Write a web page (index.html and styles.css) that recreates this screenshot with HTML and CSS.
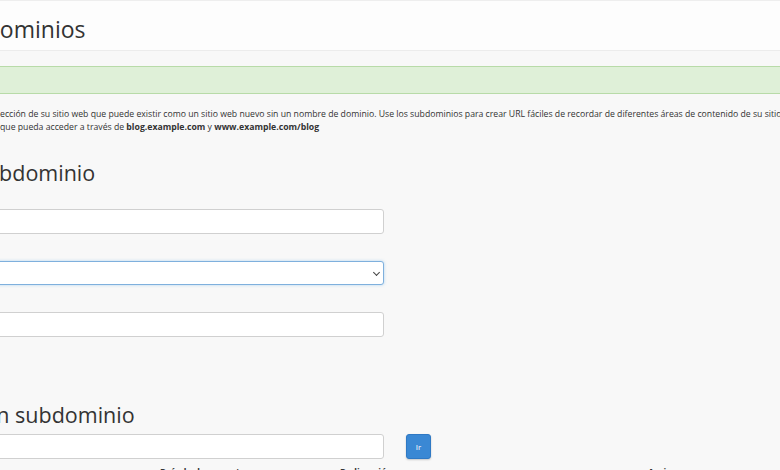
FILE: index.html
```html
<!DOCTYPE html>
<html lang="es">
  <head>
    <meta charset="UTF-8" />
    <meta name="viewport" content="width=device-width, initial-scale=1.0" />
    <title>Subdominios</title>
    <link rel="stylesheet" href="styles.css">
  </head>
  <body>
    <div class="page-header">
      <h1 class="page-title">Subdominios</h1>
    </div>
    <div class="content">
      <div class="alert-success"></div>
      <p class="description">
        <span class="line">ección de su sitio web que puede existir como un sitio web nuevo sin un nombre de dominio. Use los subdominios para crear URL fáciles de recordar de diferentes áreas de contenido de su sitio. Por ejemplo, puede crear un subdominio para su blog al</span>
        <span class="line">que pueda acceder a través de <b>blog.example.com</b> y <b>www.example.com/blog</b></span>
      </p>

      <h2 class="section-title">Crear un subdominio</h2>
      <form class="create-form">
        <input class="form-control" type="text" />
        <div class="select-wrap">
          <select class="form-control focused">
            <option></option>
          </select>
        </div>
        <input class="form-control" type="text" />
      </form>

      <h2 class="section-title modify">Modificar un subdominio</h2>
      <div class="search-row">
        <input class="form-control" type="text" />
        <button class="btn-primary" type="button">Ir</button>
      </div>
      <div class="table-head">
        <span class="col-root">Raíz de documento</span>
        <span class="col-redirect">Redirección</span>
        <span class="col-actions">Acciones</span>
      </div>
    </div>
  </body>
</html>
```

FILE: styles.css
```css
html, body {
  overflow: hidden;
}
body {
  margin: 0;
  width: 780px;
  height: 470px;
  background-color: #f8f8f8;
  font-family: "Open Sans", "Liberation Sans", sans-serif;
  color: #333;
}

.page-header {
  background-color: #fdfdfd;
  border-top: 1px solid #eee;
  border-bottom: 1px solid #ececec;
  height: 51px;
  display: flex;
  align-items: center;
  padding-top: 6px;
  box-sizing: border-box;
}
.page-title {
  margin: 0 0 0 -55px;
  font-size: 23px;
  font-weight: 400;
  white-space: nowrap;
}

.content {
  margin-left: -117px;
  width: 1000px;
}

.alert-success {
  margin-top: 15px;
  height: 26px;
  background-color: #dff0d8;
  border: 1px solid #b8dba8;
}

.description {
  margin: 14px 0 0;
  font-size: 8.7px;
  line-height: 13px;
}
.description .line {
  display: block;
  white-space: nowrap;
  padding-left: 117px;
}

.section-title {
  margin: 24px 0 0;
  font-size: 21.5px;
  font-weight: 400;
  line-height: 30px;
}
.section-title.modify {
  margin-top: 63px;
}

.create-form {
  display: flex;
  flex-direction: column;
  gap: 27px;
  margin-top: 21px;
}

.form-control {
  box-sizing: border-box;
  width: 501px;
  height: 25px;
  margin: 0;
  background-color: #fff;
  border: 1px solid #d0d0d0;
  border-radius: 3px;
  font-family: inherit;
}
.select-wrap {
  position: relative;
  width: 501px;
}
.select-wrap::after {
  content: "";
  position: absolute;
  right: 5px;
  top: 9px;
  width: 4px;
  height: 4px;
  border-right: 1.3px solid #444;
  border-bottom: 1.3px solid #444;
  transform: rotate(45deg);
}
select.form-control {
  appearance: none;
  -webkit-appearance: none;
  height: 24px;
}
.form-control.focused {
  border-color: #7fb0dd;
  box-shadow: 0 0 3px rgba(102, 175, 233, 0.5);
}

.search-row {
  display: flex;
  gap: 22px;
  margin-top: 4px;
}
.btn-primary {
  width: 25px;
  height: 25px;
  padding: 0;
  border: 1px solid #2f79c4;
  border-radius: 3px;
  background-color: #3a88d4;
  color: #fff;
  font-family: inherit;
  font-size: 8px;
  box-shadow: 0 1px 2px rgba(0, 0, 0, 0.2);
}

.table-head {
  display: flex;
  margin-top: 7px;
  font-size: 9px;
  font-weight: 700;
  line-height: 12px;
  white-space: nowrap;
}
.col-root {
  margin-left: 277px;
  width: 180px;
}
.col-redirect {
  width: 308px;
}
```
